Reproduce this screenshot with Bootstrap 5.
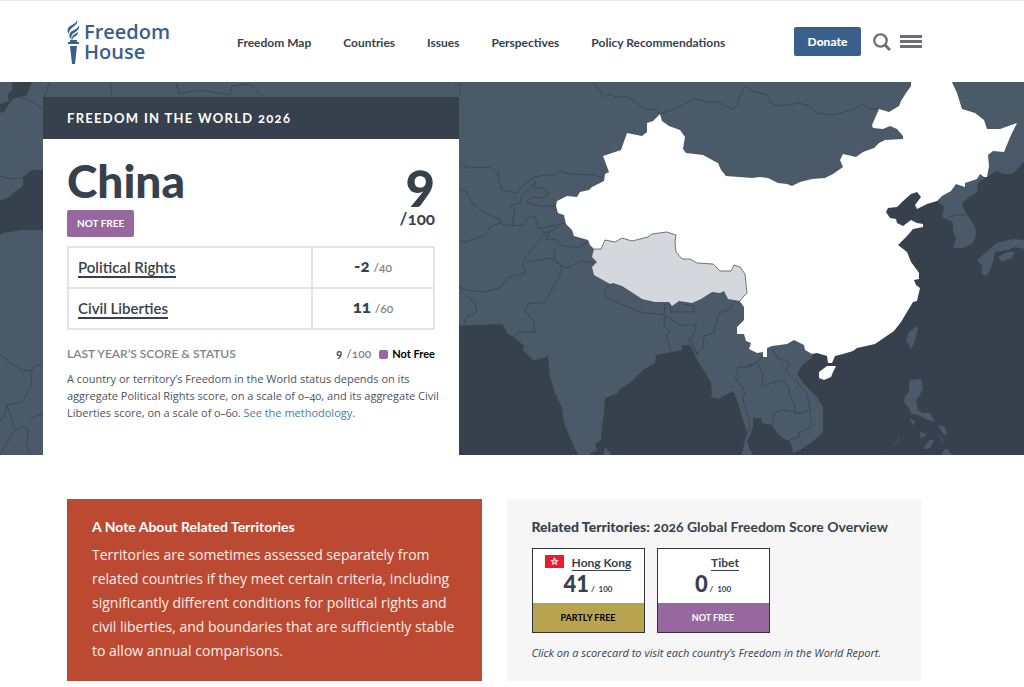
<!DOCTYPE html>
<html lang="en">
<head>
<meta charset="utf-8">
<meta name="viewport" content="width=device-width, initial-scale=1">
<title>China: Freedom in the World 2026 | Freedom House</title>
<link rel="stylesheet" href="https://cdn.jsdelivr.net/npm/bootstrap@5.3.0/dist/css/bootstrap.min.css">
<style>
:root { --ink:#37414d; --slate:#4a5a68; --purple:#9768a0; --gold:#b8a44f; --brick:#bc4a33; --blue:#3a5f8c; }
body { font-family:"Lato","Open Sans",sans-serif; color:var(--ink); font-variant-numeric:oldstyle-nums; }
.site-header { border-top:1px solid #e5e5e5; height:82px; padding:0 102px 0 67px; }
.brand-name { font:600 20px/20px "Open Sans",sans-serif; color:var(--blue); }
.main-links { gap:32px; margin-left:67px; padding-top:2px; }
.main-links a { font-size:12px; font-weight:700; color:var(--ink); text-decoration:none; }
.btn-donate { background:var(--blue); color:#fff; font-size:12px; line-height:17px; font-weight:900; padding:5px 12px; width:67px; border-radius:2px; }
.icon-btn { border:0; background:none; padding:0; color:#6a6f78; line-height:0; }
.hero { background:var(--slate); padding:15px 0 0 43px; overflow:hidden; }
.hero-map { position:absolute; inset:0; width:100%; height:100%; }
.score-panel { width:416px; max-width:100%; background:#fff; }
.panel-title { background:var(--ink); color:#fff; font-size:13px; line-height:18px; font-weight:700; letter-spacing:.1em; padding:12px 24px; }
.panel-body { padding:16px 24px 34px; }
.country { font-size:46px; line-height:51px; font-weight:900; }
.total { font-size:54px; line-height:52px; font-weight:900; }
.total-max { font-size:17px; line-height:24px; font-weight:700; }
.status { display:inline-block; background:var(--purple); color:#fff; font-size:10px; line-height:15px; font-weight:700; padding:6px 10px; border-radius:2px; }
.rights { border:2px solid #e2e3e4; margin:9px 0 0; }
.rights td, .rights th { border:2px solid #e2e3e4; height:41px; padding:0 9px 2px; vertical-align:middle; font-size:15px; line-height:20px; }
.rights a { color:var(--ink); font-weight:600; text-decoration:none; border-bottom:2px solid var(--ink); }
.rights td { width:122px; }
.rights td b { font-size:17px; font-weight:900; }
.rights td span, .faint { font-size:12px; color:#7d838b; font-weight:600; }
.last-year { margin-top:15px; font-size:11px; line-height:18px; }
.swatch { width:9px; height:9px; border-radius:2px; background:var(--purple); }
.method { font:11px/17px "Open Sans",sans-serif; margin:7px -10px 0 0; color:#4c545e; font-variant-numeric:oldstyle-nums; }
.method a { color:#4d7ba3; text-decoration:none; }
.related { display:grid; grid-template-columns:1fr 1fr; gap:25px; padding:44px 103px 6px 67px; }
.note-box, .related-box { padding:19px 20px 18px 25px; }
.note-box { background:var(--brick); color:#fff; }
.related-box { background:#f6f6f6; }
.box-title { font-size:14px; line-height:18px; margin:0; }
.note-text { font:14px/24px "Open Sans",sans-serif; margin:7px 0 0; color:#fdeee8; }
.score-card { width:113px; border:1px solid #333; background:#fff; color:var(--ink); text-decoration:none; }
.score-card .place { font-size:12px; line-height:15px; font-weight:700; border-bottom:1px solid var(--ink); }
.score-card .points { font-size:22px; line-height:26px; font-weight:900; font-variant-numeric:lining-nums; }
.score-card .points small { font-size:8px; font-weight:700; }
.card-top { height:54px; padding-top:6px; }
.card-status { font-size:9px; line-height:29px; font-weight:700; text-align:center; }
.hint { font:italic 11px/16px "Open Sans",sans-serif; margin:12px 0 0; }
@media (max-width:900px) { .site-header { height:auto; flex-wrap:wrap; padding:16px; } .main-links { margin-left:0; flex-wrap:wrap; } .related { grid-template-columns:1fr; padding:24px 16px; } .hero { padding-left:0; } }
</style>
</head>
<body>
<header class="site-header d-flex align-items-center">
  <a href="#" class="d-flex align-items-center gap-1 text-decoration-none" aria-label="Freedom House">
    <svg width="13" height="46" viewBox="0 0 13 46" fill="#3a5f8c" aria-hidden="true">
      <path d="M10 0C11 4 9 6 6 8C3 10 2 12 2 15C-1 11 1 8 5 6C8 4 10 3 10 0Z"/>
      <path d="M12 6C13 10 10 12 7 14C4 16 4 18 5 21C1 18 2 14 5 12C9 10 11 9 12 6Z"/>
      <path d="M11 13C11 16 9 17 7 18C6 19 6 20 6 21C4 18 6 16 8 15Z"/>
      <path d="M3 21H10V23H12V25H1V23H3ZM3 27H10L8 45H5Z"/>
    </svg>
    <span class="brand-name">Freedom<br>House</span>
  </a>
  <nav class="main-links d-flex" aria-label="Main">
    <a href="#">Freedom Map</a><a href="#">Countries</a><a href="#">Issues</a><a href="#">Perspectives</a><a href="#">Policy Recommendations</a>
  </nav>
  <div class="d-flex align-items-center ms-auto">
    <button type="button" class="btn btn-donate">Donate</button>
    <button type="button" class="icon-btn ms-2 ps-1" aria-label="Search"><svg width="18" height="18" viewBox="0 0 18 18" fill="none" stroke="currentColor"><circle cx="7.500" cy="7.500" r="6.200" stroke-width="2.300"/><path d="M12 12L17 17" stroke-width="3"/></svg></button>
    <button type="button" class="icon-btn ms-2" aria-label="Menu"><svg width="23" height="14" viewBox="0 0 23 14" fill="currentColor"><path d="M1 0H23V3H1ZM1 5H23V8H1ZM1 10H23V13H1Z"/></svg></button>
  </div>
</header>

<main>
<section class="hero position-relative">
  <svg class="hero-map" viewBox="0 82 1024 373" preserveAspectRatio="xMidYMid slice" aria-hidden="true">
    <g fill="#37414d">
      <path d="M12 82H32L27 95L13 99L8 105L5 111L0 113V104L9 101L7 95L12 90Z"/>
      <path d="M0 201L9 197L13 193L23 186V177L28 173L32 170H46V230H23L3 233L0 235Z"/>
      <path d="M455 326L502 324L508 334L515 338L524 346L523 350L533 360L540 359L548 356L550 377L555 393L562 408L564 423L572 442L579 457H455Z"/>
      <path d="M588 457L592 452L597 451L595 444L601 440L602 427L604 413L605 398L618 393L619 390L632 381L643 370L655 363L656 355L672 352L682 350V345H690L695 355L698 362L705 372L711 383L712 393L711 397L718 399L733 391L738 403L743 420L747 432L744 445L741 457Z"/>
      <path d="M754 457L750 450L747 442L753 427V418H761L762 423L772 425L777 433L784 439L790 441L792 447L793 453L800 450L812 442L823 432V407L817 397L803 383L797 374L802 365L812 358L815 340L850 330L870 210L917 188L937 201L944 207L942 217L946 219L953 222V232L956 238L953 248H963L973 243L976 235L975 227L968 215L963 208L962 203L968 198L977 192L978 183L987 177L997 171L1003 174H1012L1024 162V457Z"/>
    </g>
    <g fill="#4a5a68">
      <path d="M977 260L985 253L997 243L1013 239L1024 240V249L1015 247L1008 250L995 252L993 262L989 272L986 276L982 274V266Z"/>
      <path d="M998 257L1007 252H1015L1012 258L1002 262Z"/>
      <path d="M917 326L918 329L914 343L911 349L906 340L909 332Z"/>
      <path d="M910 380L921 379L923 388L920 395L916 400L918 410L922 413L930 413L935 422L926 419L918 415L911 414L909 408L904 402L905 396L909 392Z"/>
      <path d="M909 418L915 421L913 426ZM920 432L927 434L921 439ZM938 425L945 427L947 435L943 434ZM938 433L943 439V443ZM924 447L930 440H934L930 448L925 449ZM941 455L946 448L952 454V457H941ZM901 436L888 452L885 455L898 441Z"/>
      <path d="M603 457L605 447L614 457Z"/>
    </g>
    <g fill="none" stroke="#36424f" stroke-width=".8">
      <path d="M593 82L604 97L607 94L616 97L628 97L641 106L646 110L655 109L660 114L672 110L695 99L707 102L717 102L733 109L737 105L739 98L745 86L753 91L768 95L770 103L781 106L798 103L807 105L818 113L834 115L855 109L862 104L871 109L879 109"/>
      <path d="M459 161L467 168L490 167L498 173L499 180L502 190L517 193L523 185L535 177L545 175L554 175L558 171L570 174L595 175L604 179"/>
      <path d="M459 189L466 191L473 204L485 213L501 220V224L512 226L515 209L510 206L520 203L521 196L530 188L536 181L533 187L543 188L549 193L543 198L532 197L526 202L541 206L556 206M501 223L491 226L484 236L471 240L466 242L459 240M512 226L524 225L528 218L535 216L538 228L549 227L565 223M538 228L545 233L559 227M545 234L532 249L525 259L522 265L526 273L509 277L500 288L483 292L467 290L459 286L466 297L475 302L477 312L467 317L464 325M549 231L546 240L556 239L560 245L578 248L588 242M555 248L554 258L561 266L568 268L580 261L594 263M526 262L550 258L562 266L560 275L544 303L529 303L525 311L534 322L535 332L518 332L513 338"/>
      <path d="M609 285L604 292L606 297L619 303L633 309L641 312L664 315L665 304M669 303L671 312L694 312V306L684 304M665 316L676 322L678 325H696L694 334L688 340L697 354L703 348L704 336L713 333L717 321L719 313L730 309L735 301M665 316L664 326L670 331L666 335L671 351M690 337L698 356"/>
      <path d="M755 364L744 368L739 366L735 377L745 392L743 399L748 416L750 428L742 445M744 368L757 362L763 356M757 362L763 374L762 387L774 382L783 380L789 387L790 396L795 405L795 413L801 413L810 410L807 394L793 378L785 370L790 366L787 361L778 359L772 349M772 425L774 413L783 410L795 412M810 410L811 427L799 432V437L790 440"/>
      <path d="M947 218L956 215L968 215M0 354L12 364L22 370L32 371L35 365L44 366M32 371L31 386L22 402L7 405L4 416L0 421M7 405L15 430L22 426L28 430L27 448L31 455M31 418L44 413M0 176L12 179L24 177M20 97L30 101L44 109M0 455L6 444L15 430M110 82L112 97M176 82L179 94L200 90L230 95L232 86L250 84L260 93L264 97M455 86L461 84L460 95M44 97L50 82"/>
    </g>
    <path fill="#fff" d="M594 249L590 245L588 240L574 236L572 230L566 224L564 215L558 213L556 206L557 201L567 196L577 197L580 192L589 190L592 187L604 181L605 174L609 172L603 156L621 150L627 133L642 136L647 132V123L653 121L660 114L662 121L669 126L680 130L685 137L683 149L686 153L703 155L714 161L718 163L721 170L726 176L752 178L760 177L768 178L778 183L787 184L792 186L800 182L812 179L825 178L833 174L843 167L840 160L843 154L856 157L863 152L874 148L879 143L885 140L903 139V136L897 129L890 126L883 129L873 128L872 125L879 109L889 112L899 106L901 101L906 93L911 86V80H951L957 93L962 109L975 113L984 120L987 129H1000L1017 123L1011 135L1004 152L993 151L988 155L989 166L987 177H984L980 174L977 179L965 183V187L956 184L951 191L942 196L937 201L927 204L917 209L915 205L921 197L917 192L911 194L902 202L897 207L888 208L886 212L890 218L896 219L897 223L903 226L911 220L917 223L923 224V227L913 229L908 235L903 240L898 245L907 252L911 262L917 270L919 273V279L914 280L916 285L920 288L917 301L913 302L907 312L901 322L894 331L875 344L857 348L853 351L843 354L835 356L832 363H828L827 356L817 353L812 354L805 350L804 345L794 340L787 344L772 346L767 348V357H763V352L757 353L749 349L751 343L746 341L744 334H737V327L744 320V307L739 300L720 282L680 282L640 265L600 260Z"/>
    <path fill="#fff" d="M819 372L827 366H836L833 372L831 377L824 380L819 378Z"/>
    <path fill="#d4d8dd" d="M594 249H601L605 240L615 242L622 238L632 241L648 237L652 234L667 232L676 235L675 242L676 252L682 259H690L697 263L713 264L720 271H731L734 265L740 267L745 274L747 293L742 298L740 301L728 299L724 291L720 293L712 292L701 299L692 303L679 301L672 306L669 302L655 302L642 299L633 293L622 286L613 283L610 284L594 275L592 267L597 262L592 257Z"/>
    <path fill="none" stroke="#62676c" stroke-width=".9" d="M594 249H601L605 240L615 242L622 238L632 241L648 237L652 234L667 232L676 235L675 242L676 252L682 259H690L697 263L713 264L720 271H731L734 265L740 267L745 274L747 293L742 298L740 301"/>
  </svg>
  <article class="score-panel position-relative">
    <h2 class="panel-title m-0">FREEDOM IN THE WORLD 2026</h2>
    <div class="panel-body">
      <div class="d-flex justify-content-between">
        <div>
          <h1 class="country m-0">China</h1>
          <span class="status mt-1">NOT FREE</span>
        </div>
        <div class="text-end">
          <div class="total">9</div>
          <div class="total-max">/100</div>
        </div>
      </div>
      <table class="rights w-100">
        <tr><th scope="row"><a href="#">Political Rights</a></th><td class="text-center"><b>-2</b> <span>/40</span></td></tr>
        <tr><th scope="row"><a href="#">Civil Liberties</a></th><td class="text-center"><b>11</b> <span>/60</span></td></tr>
      </table>
      <div class="last-year d-flex align-items-center">
        <span class="faint me-auto">LAST YEAR’S SCORE &amp; STATUS</span>
        <b class="fw-bolder me-1">9</b><span class="faint">/100</span>
        <span class="swatch ms-2 me-1"></span><b class="text-black fw-bolder">Not Free</b>
      </div>
      <p class="method">A country or territory’s Freedom in the World status depends on its aggregate Political Rights score, on a scale of 0–40, and its aggregate Civil Liberties score, on a scale of 0–60. <a href="#">See the methodology.</a></p>
    </div>
  </article>
</section>

<section class="related">
  <div class="note-box">
    <h3 class="box-title fw-bolder">A Note About Related Territories</h3>
    <p class="note-text">Territories are sometimes assessed separately from related countries if they meet certain criteria, including significantly different conditions for political rights and civil liberties, and boundaries that are sufficiently stable to allow annual comparisons.</p>
  </div>
  <div class="related-box">
    <h3 class="box-title fw-bold"><b>Related Territories:</b> 2026 Global Freedom Score Overview</h3>
    <div class="d-flex mt-2 pt-1 gap-2">
      <a href="#" class="score-card me-1">
        <div class="card-top">
          <div class="d-flex justify-content-center gap-2">
            <svg width="19" height="13" viewBox="0 0 19 13" aria-hidden="true"><path fill="#ec1b2e" d="M0 0H19V13H0Z"/><path fill="#ffd9d9" d="M9.500 2L10.800 4.800L13.800 5.200L11.600 7.200L12.200 10.300L9.500 8.800L6.800 10.300L7.400 7.200L5.200 5.200L8.200 4.800Z"/><circle cx="9.500" cy="6.500" r="1" fill="#ec1b2e"/></svg>
            <span class="place">Hong Kong</span>
          </div>
          <div class="points text-center">41<small> /&nbsp; 100</small></div>
        </div>
        <div class="card-status text-black" style="background:var(--gold)">PARTLY FREE</div>
      </a>
      <a href="#" class="score-card">
        <div class="card-top">
          <div class="d-flex justify-content-center gap-2"><span class="ps-3"></span><span class="place">Tibet</span></div>
          <div class="points text-center">0<small> /&nbsp; 100</small></div>
        </div>
        <div class="card-status text-white" style="background:var(--purple)">NOT FREE</div>
      </a>
    </div>
    <p class="hint">Click on a scorecard to visit each country’s Freedom in the World Report.</p>
  </div>
</section>
</main>
<script src="https://cdn.jsdelivr.net/npm/bootstrap@5.3.0/dist/js/bootstrap.bundle.min.js"></script>
</body>
</html>
